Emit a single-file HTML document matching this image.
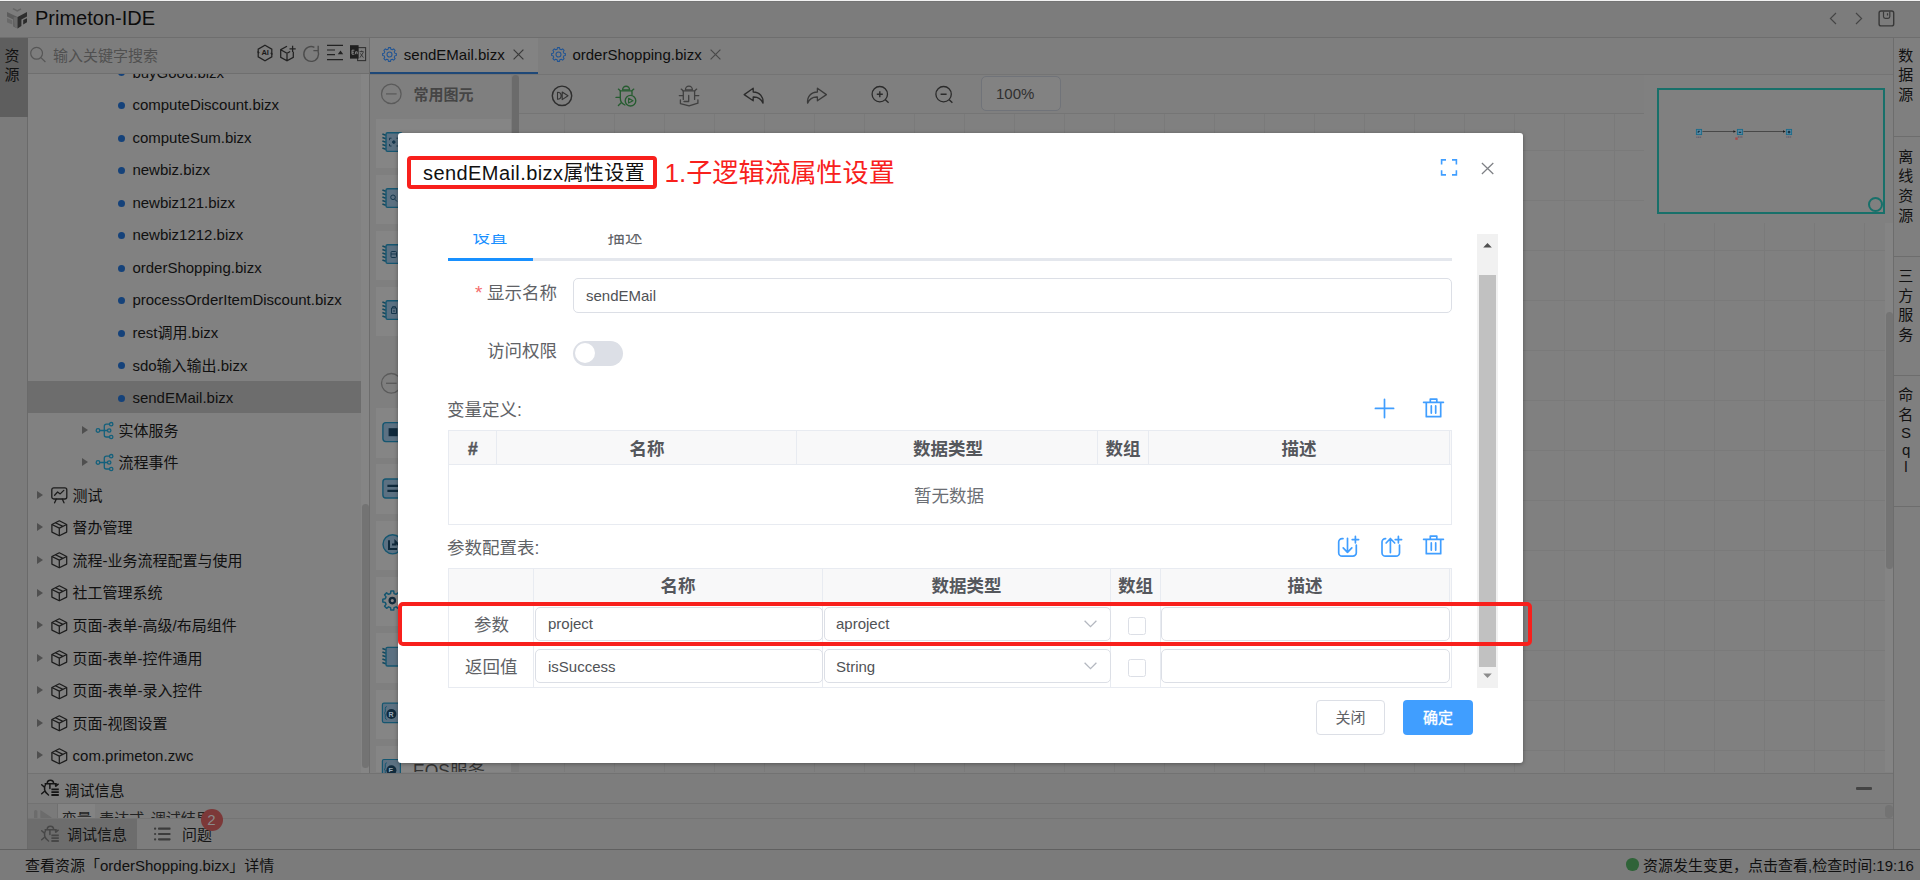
<!DOCTYPE html>
<html lang="zh-CN">
<head>
<meta charset="utf-8">
<title>Primeton-IDE</title>
<style>
*{box-sizing:border-box;margin:0;padding:0}
html,body{width:1920px;height:880px;overflow:hidden;background:#808080}
body{font-family:"Liberation Sans","Noto Sans CJK SC",sans-serif;font-size:15px;color:#000;position:relative}
.abs{position:absolute}
.t{position:absolute;white-space:nowrap;line-height:20px}
svg{position:absolute;overflow:visible}
#hdr{left:0;top:0;width:1920px;height:38px;background:#7c7c7c;border-bottom:1px solid #6e6e6e}
#lstrip{left:0;top:38px;width:28px;height:811px;background:#7b7b7b;border-right:1px solid #6a6a6a}
#lstrip-act{left:0;top:38px;width:28px;height:78.500px;background:#5e5e5e}
#search{left:28px;top:38px;width:341px;height:36px;background:#7d7d7d;border-bottom:1px solid #6f6f6f}
#tree{left:28px;top:74px;width:341px;height:699px;background:#818181;overflow:hidden;border-top:1px solid #6f6f6f}
#tree{border-top:0}
.row{position:absolute;left:0;width:333px;height:32px}
.row.sel{background:#6d6d6d}
.dot{position:absolute;width:7px;height:7px;border-radius:50%;background:#15427a}
.tri{position:absolute;width:0;height:0;border-left:6px solid #4f4f4f;border-top:4.5px solid transparent;border-bottom:4.5px solid transparent}
#split{left:369px;top:38px;width:1px;height:735px;background:#6d6d6d}
#tabs{left:370px;top:38px;width:1523px;height:37px;background:#7e7e7e;border-bottom:1px solid #747474}
#tab1{left:370px;top:38px;width:168px;height:34px;background:#838383}
#tab1u{left:370px;top:72px;width:168px;height:2px;background:#1e4878}
#pal{left:370px;top:75px;width:141px;height:697px;background:#7f7f7f;overflow:hidden}
.pi{position:absolute;left:6px;width:135px;height:49.500px;background:#858585}
#palsb{left:511px;top:75px;width:8px;height:697px;background:#7b7b7b}
#canvas{left:519px;top:113px;width:1374px;height:659px;overflow:hidden;background-color:#808080;
 background-image:linear-gradient(90deg,#7a7a7a 1px,transparent 1px),linear-gradient(#7a7a7a 1px,transparent 1px);
 background-size:50px 50px;background-position:-5px 37px}
#tbar{left:519px;top:75px;width:1125px;height:38.500px;background:#7f7f7f;border-bottom:1px solid #757575}
#mini{left:1644px;top:75px;width:249px;height:148px;background:#808080}
#rstrip{left:1893px;top:38px;width:27px;height:811px;background:#7f7f7f;border-left:1px solid #6d6d6d}
.rsep{position:absolute;left:0;width:27px;height:1px;background:#6d6d6d}
#dbg{left:28px;top:773px;width:1865px;height:76px;background:#7d7d7d;border-top:1px solid #727272}
#status{left:0;top:849px;width:1920px;height:31px;background:#7b7b7b;border-top:1px solid #606060}
#modal{left:398px;top:133px;width:1125px;height:630px;background:#fff;border-radius:3px;box-shadow:0 1px 4px rgba(0,0,0,.35)}
.inp{position:absolute;border:1px solid #dcdfe6;border-radius:5px;background:#fff}
.tbl{position:absolute;border:1px solid #e8ebf1;background:#fff}
.th{position:absolute;background:#f8f8f9}
.vl{position:absolute;top:0;width:1px;background:#e8ebf1}
.hl{position:absolute;left:0;width:1002px;height:1px;background:#e8ebf1}

</style>
</head>
<body>
<div id="hdr" class="abs"></div>
<div class="abs" style="left:0;top:0;width:1920px;height:1px;background:#f2f2f2"></div>
<div class="abs" style="left:0;top:1px;width:1920px;height:1px;background:#747474"></div>
<svg style="left:0;top:0" width="40" height="38" viewBox="0 0 40 38">
<polyline points="13,8.6 17.3,10.9 21,8.9" fill="none" stroke="#646464" stroke-width="1.6"/>
<polygon points="7,12 17.6,17 17.6,28.4 13.2,26.4 13.2,19.5 7,16.6" fill="#5c5c5c"/>
<polygon points="13.6,17.2 17.6,17 17.6,28.4 14.6,27" fill="#6a6a6a"/>
<polygon points="7,18 12.3,20.5 12.3,24.5 7,22.2" fill="#696969"/>
<polygon points="17.6,17 27,12 27,16.4 21.4,19.5 21.4,26 17.6,28.4" fill="#2e2e2e"/>
<polygon points="23.2,20.1 27,18.2 27,22.3 23.2,24.5" fill="#2a2a2a"/>
</svg>
<div class="t" style="left:35px;top:7.3px;font-size:20px;line-height:22px;color:#0c0c0c;">Primeton-IDE</div>
<svg style="left:1820px;top:0" width="90" height="38" viewBox="1820 0 90 38" fill="none" stroke="#444" stroke-width="1.3">
<polyline points="1836,13 1830.400,18.500 1836,24" stroke="#454545" stroke-width="1.150"/>
<polyline points="1856,13 1861.600,18.500 1856,24" stroke="#454545" stroke-width="1.150"/>
<rect x="1879.100" y="11" width="14.600" height="14.900" rx="2" stroke="#383838" stroke-width="1.400"/>
<path d="M1883.500 11.400v5.200q0 1.700 1.700 1.700h2.900q1.700 0 1.700-1.700v-5.200M1887.500 13.200v2.400" stroke="#3a3a3a" stroke-width="1.200"/>
</svg>
<div id="lstrip" class="abs"></div><div id="lstrip-act" class="abs"></div>
<div class="t" style="left:4.5px;top:45.5px;font-size:15px;line-height:20px;color:#111;">资</div>
<div class="t" style="left:4.5px;top:65.3px;font-size:15px;line-height:20px;color:#111;">源</div>
<div id="search" class="abs"></div>
<svg style="left:28px;top:38px" width="341" height="35" viewBox="28 38 341 35" fill="none" stroke="#222" stroke-width="1.25">
<g stroke="#565656" stroke-width="1.2"><circle cx="36.6" cy="53.3" r="5.9"/><path d="M40.9 57.6L45.4 62"/></g>
<!-- AI hexagon -->
<path d="M265 45.2l6.8 3.9v7.8l-6.8 3.9-6.8-3.9v-7.8z"/>
<path d="M257.6 51.6l1.6 1.6M272.4 54.4l-1.6-1.6" stroke-width="1.4"/>
<!-- cube plus -->
<path d="M287 46.2l-6.3 3.5v7.6l6.3 3.5 6.3-3.5v-5.5M280.7 49.7l6.3 3.6 3.2-1.8M287 53.3v7.5"/>
<path d="M289.5 48.8h6.2M292.6 45.7v6.2"/>
<!-- refresh -->
<path d="M318 51a7.400 7.400 0 1 1-3.600-3.700" stroke="#4c4c4c" stroke-width="1.400"/><path d="M318.200 45.800v4.800h-4.800" stroke="#4c4c4c" stroke-width="1.400"/>
<!-- collapse -->
<path d="M327 45.4h16M327 50h8M327 54.6h8M327 59.6h16" stroke-width="1.2"/><path d="M337.8 54.2l2.7-3.8 2.7 3.8z" fill="#222" stroke="none"/>
<!-- translate -->
<rect x="357.6" y="47.6" width="8" height="13" stroke="#333" stroke-width="1.1"/>
<rect x="350" y="45.2" width="8.6" height="13.4" fill="#1f1f1f" stroke="none"/>
<path d="M359.6 51.6h4M361.6 50.6v1M360 57.6l3.4-5.4M360.4 53.4l3 4.2" stroke="#333" stroke-width=".9"/>
<path d="M352 50.2h2.4M352 52.2h2M352 54.2h2.4M352 50.2v4M355.6 54.2v-2.4h1.6v2.4" stroke="#9a9a9a" stroke-width=".8"/>
</svg>
<div class="t" style="left:257.2px;top:47px;font-size:7.5px;line-height:11px;color:#1a1a1a;font-weight:bold;width:15.6px;text-align:center;letter-spacing:-.2px">AI</div>
<div class="t" style="left:53px;top:45.5px;font-size:15px;line-height:20px;color:#505050;">输入关键字搜索</div>
<div id="tree" class="abs">
<div class="dot" style="left:90.3px;top:-4.6px"></div>
<div class="t" style="left:104.4px;top:-11.4px;font-size:15px;line-height:20px;color:#101010;">buyGood.bizx</div>
<div class="dot" style="left:90.3px;top:28.0px"></div>
<div class="t" style="left:104.4px;top:21.15px;font-size:15px;line-height:20px;color:#101010;">computeDiscount.bizx</div>
<div class="dot" style="left:90.3px;top:60.5px"></div>
<div class="t" style="left:104.4px;top:53.7px;font-size:15px;line-height:20px;color:#101010;">computeSum.bizx</div>
<div class="dot" style="left:90.3px;top:93.1px"></div>
<div class="t" style="left:104.4px;top:86.25px;font-size:15px;line-height:20px;color:#101010;">newbiz.bizx</div>
<div class="dot" style="left:90.3px;top:125.6px"></div>
<div class="t" style="left:104.4px;top:118.8px;font-size:15px;line-height:20px;color:#101010;">newbiz121.bizx</div>
<div class="dot" style="left:90.3px;top:158.2px"></div>
<div class="t" style="left:104.4px;top:151.35px;font-size:15px;line-height:20px;color:#101010;">newbiz1212.bizx</div>
<div class="dot" style="left:90.3px;top:190.7px"></div>
<div class="t" style="left:104.4px;top:183.9px;font-size:15px;line-height:20px;color:#101010;">orderShopping.bizx</div>
<div class="dot" style="left:90.3px;top:223.2px"></div>
<div class="t" style="left:104.4px;top:216.45px;font-size:15px;line-height:20px;color:#101010;">processOrderItemDiscount.bizx</div>
<div class="dot" style="left:90.3px;top:255.8px"></div>
<div class="t" style="left:104.4px;top:249.0px;font-size:15px;line-height:20px;color:#101010;">rest调用.bizx</div>
<div class="dot" style="left:90.3px;top:288.4px"></div>
<div class="t" style="left:104.4px;top:281.55px;font-size:15px;line-height:20px;color:#101010;">sdo输入输出.bizx</div>
<div class="row sel" style="top:307.3px;height:31.6px"></div>
<div class="dot" style="left:90.3px;top:320.9px"></div>
<div class="t" style="left:104.4px;top:314.1px;font-size:15px;line-height:20px;color:#101010;">sendEMail.bizx</div>
<div class="tri" style="left:54px;top:351.8px"></div>
<svg style="left:68px;top:347.6px" width="18" height="18" viewBox="0 0 18 18"><g fill="none" stroke="#13607c" stroke-width="1.3"><circle cx="2" cy="8.5" r="1.8"/><circle cx="13.2" cy="8.5" r="1.7"/><circle cx="15.2" cy="2.2" r="1.7"/><circle cx="15.2" cy="15" r="1.7"/><path d="M3.8 8.5h7.7M13.5 2.2h-3.2a2 2 0 0 0-2 2v8.8a2 2 0 0 0 2 2h3.2"/></g></svg>
<div class="t" style="left:90.5px;top:346.65px;font-size:15px;line-height:20px;color:#101010;">实体服务</div>
<div class="tri" style="left:54px;top:384.3px"></div>
<svg style="left:68px;top:380.2px" width="18" height="18" viewBox="0 0 18 18"><g fill="none" stroke="#13607c" stroke-width="1.3"><circle cx="2" cy="8.5" r="1.8"/><circle cx="13.2" cy="8.5" r="1.7"/><circle cx="15.2" cy="2.2" r="1.7"/><circle cx="15.2" cy="15" r="1.7"/><path d="M3.8 8.5h7.7M13.5 2.2h-3.2a2 2 0 0 0-2 2v8.8a2 2 0 0 0 2 2h3.2"/></g></svg>
<div class="t" style="left:90.5px;top:379.2px;font-size:15px;line-height:20px;color:#101010;">流程事件</div>
<div class="tri" style="left:9px;top:416.9px"></div>
<svg style="left:22.6px;top:413.4px" width="17" height="17" viewBox="0 0 17 17"><g fill="none" stroke="#1c1c1c" stroke-width="1.3" stroke-linejoin="round" stroke-linecap="round"><rect x=".8" y=".8" width="15" height="11.2" rx="2"/><path d="M3.6 8.2l3-3.2 2.6 1.9 3.6-3.5M5.2 12.2l-1.6 3.6M11.4 12.2l1.6 3.6"/></g></svg>
<div class="t" style="left:44.599999999999994px;top:411.75px;font-size:15px;line-height:20px;color:#101010;">测试</div>
<div class="tri" style="left:9px;top:449.4px"></div>
<svg style="left:22.6px;top:445.9px" width="17" height="17" viewBox="0 0 17 17"><g fill="none" stroke="#1c1c1c" stroke-width="1.25" stroke-linejoin="round"><path d="M8.3 .8l7.4 3.7v7.6l-7.4 3.7-7.4-3.7v-7.6z"/><path d="M.9 4.5l7.4 3.6 7.4-3.6M8.3 8.1v7.7M4.4 2.7l7.5 3.7"/></g></svg>
<div class="t" style="left:44.599999999999994px;top:444.3px;font-size:15px;line-height:20px;color:#101010;">督办管理</div>
<div class="tri" style="left:9px;top:481.9px"></div>
<svg style="left:22.6px;top:478.4px" width="17" height="17" viewBox="0 0 17 17"><g fill="none" stroke="#1c1c1c" stroke-width="1.25" stroke-linejoin="round"><path d="M8.3 .8l7.4 3.7v7.6l-7.4 3.7-7.4-3.7v-7.6z"/><path d="M.9 4.5l7.4 3.6 7.4-3.6M8.3 8.1v7.7M4.4 2.7l7.5 3.7"/></g></svg>
<div class="t" style="left:44.599999999999994px;top:476.85px;font-size:15px;line-height:20px;color:#101010;">流程-业务流程配置与使用</div>
<div class="tri" style="left:9px;top:514.5px"></div>
<svg style="left:22.6px;top:511.0px" width="17" height="17" viewBox="0 0 17 17"><g fill="none" stroke="#1c1c1c" stroke-width="1.25" stroke-linejoin="round"><path d="M8.3 .8l7.4 3.7v7.6l-7.4 3.7-7.4-3.7v-7.6z"/><path d="M.9 4.5l7.4 3.6 7.4-3.6M8.3 8.1v7.7M4.4 2.7l7.5 3.7"/></g></svg>
<div class="t" style="left:44.599999999999994px;top:509.4px;font-size:15px;line-height:20px;color:#101010;">社工管理系统</div>
<div class="tri" style="left:9px;top:547.0px"></div>
<svg style="left:22.6px;top:543.5px" width="17" height="17" viewBox="0 0 17 17"><g fill="none" stroke="#1c1c1c" stroke-width="1.25" stroke-linejoin="round"><path d="M8.3 .8l7.4 3.7v7.6l-7.4 3.7-7.4-3.7v-7.6z"/><path d="M.9 4.5l7.4 3.6 7.4-3.6M8.3 8.1v7.7M4.4 2.7l7.5 3.7"/></g></svg>
<div class="t" style="left:44.599999999999994px;top:541.95px;font-size:15px;line-height:20px;color:#101010;">页面-表单-高级/布局组件</div>
<div class="tri" style="left:9px;top:579.6px"></div>
<svg style="left:22.6px;top:576.1px" width="17" height="17" viewBox="0 0 17 17"><g fill="none" stroke="#1c1c1c" stroke-width="1.25" stroke-linejoin="round"><path d="M8.3 .8l7.4 3.7v7.6l-7.4 3.7-7.4-3.7v-7.6z"/><path d="M.9 4.5l7.4 3.6 7.4-3.6M8.3 8.1v7.7M4.4 2.7l7.5 3.7"/></g></svg>
<div class="t" style="left:44.599999999999994px;top:574.5px;font-size:15px;line-height:20px;color:#101010;">页面-表单-控件通用</div>
<div class="tri" style="left:9px;top:612.1px"></div>
<svg style="left:22.6px;top:608.6px" width="17" height="17" viewBox="0 0 17 17"><g fill="none" stroke="#1c1c1c" stroke-width="1.25" stroke-linejoin="round"><path d="M8.3 .8l7.4 3.7v7.6l-7.4 3.7-7.4-3.7v-7.6z"/><path d="M.9 4.5l7.4 3.6 7.4-3.6M8.3 8.1v7.7M4.4 2.7l7.5 3.7"/></g></svg>
<div class="t" style="left:44.599999999999994px;top:607.05px;font-size:15px;line-height:20px;color:#101010;">页面-表单-录入控件</div>
<div class="tri" style="left:9px;top:644.7px"></div>
<svg style="left:22.6px;top:641.2px" width="17" height="17" viewBox="0 0 17 17"><g fill="none" stroke="#1c1c1c" stroke-width="1.25" stroke-linejoin="round"><path d="M8.3 .8l7.4 3.7v7.6l-7.4 3.7-7.4-3.7v-7.6z"/><path d="M.9 4.5l7.4 3.6 7.4-3.6M8.3 8.1v7.7M4.4 2.7l7.5 3.7"/></g></svg>
<div class="t" style="left:44.599999999999994px;top:639.6px;font-size:15px;line-height:20px;color:#101010;">页面-视图设置</div>
<div class="tri" style="left:9px;top:677.2px"></div>
<svg style="left:22.6px;top:673.8px" width="17" height="17" viewBox="0 0 17 17"><g fill="none" stroke="#1c1c1c" stroke-width="1.25" stroke-linejoin="round"><path d="M8.3 .8l7.4 3.7v7.6l-7.4 3.7-7.4-3.7v-7.6z"/><path d="M.9 4.5l7.4 3.6 7.4-3.6M8.3 8.1v7.7M4.4 2.7l7.5 3.7"/></g></svg>
<div class="t" style="left:44.599999999999994px;top:672.15px;font-size:15px;line-height:20px;color:#101010;">com.primeton.zwc</div>
<div class="abs" style="left:333px;top:0;width:8px;height:699px;background:#858585"></div>
<div class="abs" style="left:333.5px;top:430px;width:7px;height:264px;background:#737373;border-radius:4px"></div>
</div>
<div id="split" class="abs"></div><div id="tabs" class="abs"></div><div id="tab1" class="abs"></div><div id="tab1u" class="abs"></div>
<svg style="left:381.900px;top:47px" width="15" height="15" viewBox="0 0 15 15"><g fill="none" stroke="#205494" stroke-width="1.050" stroke-linejoin="round"><path d="M6.17 2.16L6.47 0.63L8.53 0.63L8.83 2.16L10.33 2.79L11.63 1.91L13.09 3.37L12.21 4.67L12.84 6.17L14.37 6.47L14.37 8.53L12.84 8.83L12.21 10.33L13.09 11.63L11.63 13.09L10.33 12.21L8.83 12.84L8.53 14.37L6.47 14.37L6.17 12.84L4.67 12.21L3.37 13.09L1.91 11.63L2.79 10.33L2.16 8.83L0.63 8.53L0.63 6.47L2.16 6.17L2.79 4.67L1.91 3.37L3.37 1.91L4.67 2.79z"/><circle cx="7.500" cy="7.500" r="2.500"/></g></svg>
<div class="t" style="left:403.8px;top:45.2px;font-size:15px;line-height:20px;color:#0e0e0e;">sendEMail.bizx</div>
<svg style="left:513px;top:49px" width="11" height="11" viewBox="0 0 11 11"><path d="M.6.6l9.8 9.8M10.4.6L.6 10.4" stroke="#3a3a3a" stroke-width="1.2"/></svg>
<svg style="left:551.100px;top:47px" width="15" height="15" viewBox="0 0 15 15"><g fill="none" stroke="#205494" stroke-width="1.050" stroke-linejoin="round"><path d="M6.17 2.16L6.47 0.63L8.53 0.63L8.83 2.16L10.33 2.79L11.63 1.91L13.09 3.37L12.21 4.67L12.84 6.17L14.37 6.47L14.37 8.53L12.84 8.83L12.21 10.33L13.09 11.63L11.63 13.09L10.33 12.21L8.83 12.84L8.53 14.37L6.47 14.37L6.17 12.84L4.67 12.21L3.37 13.09L1.91 11.63L2.79 10.33L2.16 8.83L0.63 8.53L0.63 6.47L2.16 6.17L2.79 4.67L1.91 3.37L3.37 1.91L4.67 2.79z"/><circle cx="7.500" cy="7.500" r="2.500"/></g></svg>
<div class="t" style="left:572.4px;top:45.2px;font-size:15px;line-height:20px;color:#0e0e0e;">orderShopping.bizx</div>
<svg style="left:709.6px;top:49px" width="11" height="11" viewBox="0 0 11 11"><path d="M.6.6l9.8 9.8M10.4.6L.6 10.4" stroke="#4a4a4a" stroke-width="1.2"/></svg>
<div id="pal" class="abs">
<div class="pi" style="top:43.5px"></div>
<div class="pi" style="top:99.5px"></div>
<div class="pi" style="top:155.5px"></div>
<div class="pi" style="top:211.5px"></div>
<div class="pi" style="top:333.0px"></div>
<div class="pi" style="top:389.3px"></div>
<div class="pi" style="top:445.6px"></div>
<div class="pi" style="top:501.9px"></div>
<div class="pi" style="top:558.2px"></div>
<div class="pi" style="top:614.5px"></div>
<div class="pi" style="top:670.8px"></div>
</div>
<svg style="left:370px;top:74px" width="150" height="698" viewBox="370 74 150 698" fill="none">
<g stroke="#5b5b5b" stroke-width="1.3"><circle cx="391.3" cy="93.9" r="9.8"/><path d="M386 93.9h10.6"/><circle cx="391.3" cy="383.3" r="9.8"/><path d="M386 383.3h10.6"/></g>
<g transform="translate(0,0)">
<path d="M382.4 135.5l3.4 1.3M382.4 139l3.4 1.3M382.4 142.5l3.4 1.3M382.4 146l3.4 1.3M382.4 149.5l3.4 1.3" stroke="#14495f" stroke-width="1.6" transform="translate(0,-1.6)"/>
<rect x="386" y="132.8" width="16" height="18.6" rx="1.6" fill="#5c7182" stroke="#155670" stroke-width="1.4"/>
</g>
<g transform="translate(0,56)">
<path d="M382.4 135.5l3.4 1.3M382.4 139l3.4 1.3M382.4 142.5l3.4 1.3M382.4 146l3.4 1.3M382.4 149.5l3.4 1.3" stroke="#14495f" stroke-width="1.6" transform="translate(0,-1.6)"/>
<rect x="386" y="132.8" width="16" height="18.6" rx="1.6" fill="#5c7182" stroke="#155670" stroke-width="1.4"/>
</g>
<g transform="translate(0,112)">
<path d="M382.4 135.5l3.4 1.3M382.4 139l3.4 1.3M382.4 142.5l3.4 1.3M382.4 146l3.4 1.3M382.4 149.5l3.4 1.3" stroke="#14495f" stroke-width="1.6" transform="translate(0,-1.6)"/>
<rect x="386" y="132.8" width="16" height="18.6" rx="1.6" fill="#5c7182" stroke="#155670" stroke-width="1.4"/>
</g>
<g transform="translate(0,168)">
<path d="M382.4 135.5l3.4 1.3M382.4 139l3.4 1.3M382.4 142.5l3.4 1.3M382.4 146l3.4 1.3M382.4 149.5l3.4 1.3" stroke="#14495f" stroke-width="1.6" transform="translate(0,-1.6)"/>
<rect x="386" y="132.8" width="16" height="18.6" rx="1.6" fill="#5c7182" stroke="#155670" stroke-width="1.4"/>
</g>
<g transform="translate(0,514.6)">
<path d="M382.4 135.5l3.4 1.3M382.4 139l3.4 1.3M382.4 142.5l3.4 1.3M382.4 146l3.4 1.3M382.4 149.5l3.4 1.3" stroke="#14495f" stroke-width="1.6" transform="translate(0,-1.6)"/>
<rect x="386" y="132.8" width="16" height="18.6" rx="1.6" fill="#5c7182" stroke="#155670" stroke-width="1.4"/>
</g>
<g stroke="#16384e" stroke-width="1"><path d="M389.5 140.2v-2h2M396.5 138.2h1.5M389.5 144v2h2M396.5 146h1.5"/><circle cx="393.8" cy="142.1" r="1.3" fill="#16384e"/>
<circle cx="393" cy="197.3" r="2.3"/><path d="M394.8 199.2l2.2 2.3"/>
<rect x="391" y="251.5" width="5.5" height="6" rx="1"/><path d="M391 254h5.5"/>
<path d="M391.5 308h5v5.5h-5zM392.5 308v-1.3h3v1.3M394 310v2"/></g>
<rect x="382.9" y="422.6" width="18" height="19" rx="3" fill="#5c7182" stroke="#155670" stroke-width="1.4"/><rect x="388.6" y="428.2" width="9" height="8" fill="#102a3c"/>
<rect x="382.9" y="479" width="18" height="19" rx="3" fill="#5c7182" stroke="#155670" stroke-width="1.4"/><path d="M387.4 485.8h12M387.4 490.8h12" stroke="#102a3c" stroke-width="2.2"/>
<circle cx="392.6" cy="544.3" r="9.6" fill="#5c7182" stroke="#155670" stroke-width="1.4"/><path d="M389 540.2v8.8h8M392 544.5h3.4v-3l4 4.2" stroke="#102a3c" stroke-width="2"/>
<g stroke="#155670" stroke-width="1.500" stroke-linejoin="round" transform="translate(392.300,600.600)"><path d="M-1.77 -7.08L-1.42 -9.49L1.42 -9.49L1.77 -7.08L3.76 -6.26L5.71 -7.72L7.72 -5.71L6.26 -3.76L7.08 -1.77L9.49 -1.42L9.49 1.42L7.08 1.77L6.26 3.76L7.72 5.71L5.71 7.72L3.76 6.26L1.77 7.08L1.42 9.49L-1.42 9.49L-1.77 7.08L-3.76 6.26L-5.71 7.72L-7.72 5.71L-6.26 3.76L-7.08 1.77L-9.49 1.42L-9.49 -1.42L-7.08 -1.77L-6.26 -3.76L-7.72 -5.71L-5.71 -7.72L-3.76 -6.26z"/><circle cx="0" cy="0" r="2.700" stroke="#102a3c" stroke-width="2.200"/></g>
<rect x="382.4" y="703.2" width="18" height="19.4" rx="1.5" fill="#5c7182" stroke="#155670" stroke-width="1.2"/><circle cx="391.4" cy="714" r="5" fill="#102a3c"/><path d="M385.4 706.5q-1.5 0-1.5 2v2.5q0 1.8-1 2 1 .2 1 2v2.5q0 2 1.5 2" stroke="#155670" stroke-width="1" transform="translate(1.4,0)"/>
<rect x="382.4" y="759.5" width="18" height="19.4" rx="1.5" fill="#5c7182" stroke="#155670" stroke-width="1.2"/><circle cx="391.4" cy="770.3" r="5" fill="#102a3c"/><path d="M385.4 762.8q-1.5 0-1.5 2v2.5q0 1.8-1 2 1 .2 1 2v2.5q0 2 1.5 2" stroke="#155670" stroke-width="1" transform="translate(1.4,0)"/>
</svg>
<div class="t" style="left:413.6px;top:84.5px;font-size:15px;line-height:20px;color:#454545;font-weight:bold">常用图元</div>
<div class="t" style="left:388.6px;top:708.5px;font-size:7px;line-height:11px;color:#9ab;font-weight:bold">R</div>
<div class="abs" style="left:370px;top:752px;width:141px;height:20px;overflow:hidden"><div class="t" style="left:43px;top:7.6px;font-size:17.5px;line-height:22px;color:#333;">EOS服务</div><div class="t" style="left:18.6px;top:13px;font-size:7px;line-height:11px;color:#9ab;font-weight:bold">E</div></div>
<div id="palsb" class="abs"></div><div class="abs" style="left:511.5px;top:75px;width:7px;height:60px;background:#6b6b6b;border-radius:4px 4px 0 0"></div>
<div id="canvas" class="abs"></div>
<div id="tbar" class="abs"></div>
<div id="mini" class="abs"></div>
<svg style="left:519px;top:74px" width="560" height="40" viewBox="519 74 560 40" fill="none" stroke="#2b2b2b" stroke-width="1.3" stroke-linejoin="round">
<circle cx="562" cy="95.800" r="9.700" stroke="#2e2e2e" stroke-width="1.450"/><path d="M557.500 92.300c2.600 0 3.600 1.600 3.600 3.500s-1 3.500-3.600 3.500zM562.200 92l5.800 3.800-5.800 3.800z" stroke="#333" stroke-width="1.100"/>
<g stroke="#265c30" stroke-width="1.350" stroke-linecap="round"><path d="M622.600 89.900a3.500 3.700 0 0 1 7 0z"/><path d="M619.900 90.800h12.300M620.300 91v7.200c0 3 1.600 5.400 4.600 6.800M632 91v3.600M618.400 89.100l2.200 2M633.800 89.100l-2.200 2M616 97.400h3.800M618.400 105.500l2.800-2.700"/><circle cx="630.500" cy="100.700" r="5.300"/><path d="M628.600 98.300l4.400 2.400-4.400 2.400z" stroke-width="1.100"/></g>
<g stroke="#404040" stroke-width="1.300" stroke-linecap="round"><path d="M685.400 89.900a3.500 3.700 0 0 1 7 0z"/><path d="M682.600 90.800h12.500M683.300 91v8.400M694.600 91v8.400M681.200 89.100l2.200 2M696.700 89.100l-2.200 2M679.300 95.600h3.600M695.200 95.600h3.600M688.700 95.400v5.600M680.400 99.800v3.800l8.700 2.300 8.800-2.700v-3.400M684 101.500h4.700"/></g>
<path d="M753.200 88.200l-9 6.400 9 6.200v-3.800c4.600-.2 7.800 1.400 9.800 6.200.6-6.400-3.200-11-9.800-11.200z"/>
<path d="M817.400 88.200l9 6.400-9 6.200v-3.800c-4.600-.2-7.800 1.400-9.800 6.200-.6-6.400 3.200-11 9.800-11.200z" stroke="#3a3a3a"/>
<circle cx="879.800" cy="94.200" r="7.700"/><path d="M885.400 99.800l3.200 3M876.800 94.200h6M879.800 91.200v6" stroke-width="1.400"/>
<circle cx="943.600" cy="94.200" r="7.700"/><path d="M949.200 99.800l3.200 3M940.600 94.200h6" stroke-width="1.400"/>
</svg>
<div class="abs" style="left:981px;top:76px;width:80px;height:35px;border:1px solid #707379;border-radius:5px;background:#828282"></div>
<div class="t" style="left:996px;top:84.3px;font-size:15px;line-height:20px;color:#303030;">100%</div>
<div class="abs" style="left:1657px;top:88px;width:228px;height:126px;border:2px solid #18706a"></div>
<div class="abs" style="left:1868px;top:197px;width:15px;height:15px;border:2px solid #18706a;border-radius:50%"></div>
<svg style="left:1690px;top:125px" width="110" height="20" viewBox="1690 125 110 20" fill="none">
<path d="M1702.500 131.500h31.500M1743.500 131.500h41" stroke="#3a3a3a" stroke-width=".8"/>
<path d="M1733.400 130.300l2.600 1.200-2.600 1.200zM1783 130.300l2.600 1.200-2.600 1.200z" fill="#1a1a1a"/>
<g fill="#5686a0" stroke="#1a6c8c" stroke-width=".9"><rect x="1696.400" y="129.400" width="5.200" height="5.200"/><rect x="1737.400" y="129.400" width="5.200" height="5.200"/><rect x="1786.400" y="129.400" width="5.200" height="5.200"/></g>
<path d="M1698.200 132.800v-1.500h1.600M1738.800 132.300h2.400M1788.300 131.300h1.500v1.500h-1.500z" stroke="#0c2230" stroke-width="1"/>
<path d="M1696.300 137.300h5.200M1737.800 137h5M1786.300 137h5.200" stroke="#666070" stroke-width="1.400" stroke-dasharray="1.200 .5"/><rect x="1735.300" y="137.400" width="2.400" height="2.400" fill="#a84848"/>
</svg>
<div class="abs" style="left:1885px;top:223px;width:8px;height:549px;background:#848484"></div>
<div class="abs" style="left:1885.500px;top:312px;width:7px;height:257px;background:#747474;border-radius:4px"></div>
<div id="rstrip" class="abs"><div class="rsep" style="top:98px"></div><div class="rsep" style="top:218px"></div><div class="rsep" style="top:337px"></div><div class="rsep" style="top:468px"></div></div>
<div class="t" style="left:1898.2px;top:45.5px;font-size:15px;line-height:20px;color:#111;">数</div>
<div class="t" style="left:1898.2px;top:65.3px;font-size:15px;line-height:20px;color:#111;">据</div>
<div class="t" style="left:1898.2px;top:85.1px;font-size:15px;line-height:20px;color:#111;">源</div>
<div class="t" style="left:1898.2px;top:146.5px;font-size:15px;line-height:20px;color:#111;">离</div>
<div class="t" style="left:1898.2px;top:166.3px;font-size:15px;line-height:20px;color:#111;">线</div>
<div class="t" style="left:1898.2px;top:186.1px;font-size:15px;line-height:20px;color:#111;">资</div>
<div class="t" style="left:1898.2px;top:205.9px;font-size:15px;line-height:20px;color:#111;">源</div>
<div class="t" style="left:1898.2px;top:265.7px;font-size:15px;line-height:20px;color:#111;">三</div>
<div class="t" style="left:1898.2px;top:285.5px;font-size:15px;line-height:20px;color:#111;">方</div>
<div class="t" style="left:1898.2px;top:305.3px;font-size:15px;line-height:20px;color:#111;">服</div>
<div class="t" style="left:1898.2px;top:325.1px;font-size:15px;line-height:20px;color:#111;">务</div>
<div class="t" style="left:1898.2px;top:384.8px;font-size:15px;line-height:20px;color:#111;">命</div>
<div class="t" style="left:1898.2px;top:404.6px;font-size:15px;line-height:20px;color:#111;">名</div>
<div class="t" style="left:1901px;top:423.3px;font-size:15px;line-height:20px;color:#111;">S</div>
<div class="t" style="left:1902px;top:440.3px;font-size:15px;line-height:20px;color:#111;">q</div>
<div class="t" style="left:1904.3px;top:457.3px;font-size:15px;line-height:20px;color:#111;">l</div>
<div id="dbg" class="abs"></div>
<div class="abs" style="left:28px;top:803px;width:1865px;height:1px;background:#727272"></div>
<div class="abs" style="left:28px;top:818px;width:1865px;height:1px;background:#747474"></div>
<svg style="left:41px;top:780.400px" width="18" height="17" viewBox="0 0 18 17"><g fill="none" stroke="#151515" stroke-width="1.500" stroke-linecap="round"><path d="M6.200 3.500a3.200 3.300 0 0 1 6.400 0M4.200 3.700h11M4.700 4q-3.500 6.500 2.800 11M8.900 4v4.400M14.600 4v2M.7 4.700l2.500 2.300M.7 13.700l2.600-2.200M14.800 6.200l2.400-2"/><path d="M10.400 9.400h7.400M10.400 12.200h7.400M10.400 15h7.400" stroke-width="1.800" stroke-linecap="butt"/></g></svg>
<div class="t" style="left:64.6px;top:780.6px;font-size:15px;line-height:20px;color:#111;">调试信息</div>
<div class="abs" style="left:1855.500px;top:787px;width:16.500px;height:2.600px;background:#444;border-radius:1px"></div>
<div class="abs" style="left:28px;top:804px;width:1865px;height:14px;overflow:hidden"><div class="abs" style="left:0;top:0;width:29.500px;height:14px;background:#7a7a7a;border-right:1px solid #707070"></div><div class="abs" style="left:30px;top:0;width:37px;height:14px;background:#838383"></div><svg style="left:5.800px;top:6px" width="20" height="14" viewBox="0 0 20 14"><rect x="0" y="0" width="3.400" height="14" rx="1.500" fill="#6c6c6c"/><path d="M6.400 0l11.200 7.600v6h-11.200z" fill="#6c6c6c"/></svg><div class="t" style="left:33.8px;top:4.8px;font-size:15px;line-height:20px;color:#222;">变量</div><div class="t" style="left:71.2px;top:4.8px;font-size:15px;line-height:20px;color:#222;">表达式</div><div class="t" style="left:122.8px;top:4.8px;font-size:15px;line-height:20px;color:#222;">调试结果</div></div>
<div class="abs" style="left:1885px;top:804.500px;width:8px;height:13px;background:#737373;border-radius:4px"></div>
<div class="abs" style="left:28px;top:819px;width:109px;height:30px;background:#6d6d6d"></div>
<svg style="left:41px;top:826.200px" width="18" height="17" viewBox="0 0 18 17"><g fill="none" stroke="#474747" stroke-width="1.500" stroke-linecap="round"><path d="M6.200 3.500a3.200 3.300 0 0 1 6.400 0M4.200 3.700h11M4.700 4q-3.500 6.500 2.800 11M8.900 4v4.400M14.600 4v2M.7 4.700l2.500 2.300M.7 13.700l2.600-2.200M14.800 6.200l2.400-2"/><path d="M10.400 9.400h7.400M10.400 12.200h7.400M10.400 15h7.400" stroke-width="1.800" stroke-linecap="butt"/></g></svg>
<div class="t" style="left:67px;top:824.5px;font-size:15px;line-height:20px;color:#151515;">调试信息</div>
<svg style="left:153.800px;top:827px" width="17" height="14" viewBox="0 0 17 14"><g fill="#3c3c3c"><rect x="0" y=".6" width="2.200" height="2.200" rx="1"/><rect x="4" y=".6" width="12.600" height="2.200" rx=".8"/><rect x="0" y="5.900" width="2.200" height="2.200" rx="1"/><rect x="4" y="5.900" width="12.600" height="2.200" rx=".8"/><rect x="0" y="11.200" width="2.200" height="2.200" rx="1"/><rect x="4" y="11.200" width="12.600" height="2.200" rx=".8"/></g></svg>
<div class="t" style="left:182px;top:824.5px;font-size:15px;line-height:20px;color:#151515;">问题</div>
<div class="abs" style="left:200.500px;top:809.300px;width:22px;height:22px;border-radius:50%;background:#7c3838;color:#8a8a8a;font-size:15px;line-height:22px;text-align:center">2</div>
<div id="status" class="abs"></div>
<div class="t" style="left:25px;top:855.5px;font-size:15px;line-height:20px;color:#101010;">查看资源「orderShopping.bizx」详情</div>
<div class="abs" style="left:1626.200px;top:858.200px;width:12.400px;height:12.400px;border-radius:50%;background:#2f6338"></div>
<div class="t" style="left:1643px;top:855.5px;font-size:15px;line-height:20px;color:#101010;">资源发生变更，点击查看,检查时间:19:16</div>
<div id="modal" class="abs"></div>
<div class="abs" style="left:407px;top:156px;width:250px;height:33px;border:4px solid #f8201c;border-radius:4px"></div>
<div class="t" style="left:423px;top:160px;font-size:20px;line-height:26px;color:#111;letter-spacing:.42px">sendEMail.bizx属性设置</div>
<div class="t" style="left:664.6px;top:156.3px;font-size:26.05px;line-height:34px;color:#f8201c;">1.子逻辑流属性设置</div>
<svg style="left:1440px;top:159px" width="18" height="18" viewBox="0 0 18 18"><path d="M1.600 5.500v-4.600h4.400M12 .9h4.400v4.600M16.400 11.300v4.600h-4.400M6 15.900h-4.400v-4.600" fill="none" stroke="#409eff" stroke-width="1.600"/></svg>
<svg style="left:1481px;top:162px" width="14" height="14" viewBox="0 0 14 14"><path d="M.9 1l11.400 11M12.300 1l-11.400 11" stroke="#7e8085" stroke-width="1.250"/></svg>
<div class="abs" style="left:448px;top:234px;width:1004px;height:20px;overflow:hidden"><div class="t" style="left:24.5px;top:-9.0px;font-size:17.5px;line-height:24px;color:#1890ff;">设置</div><div class="t" style="left:159.5px;top:-9.0px;font-size:17.5px;line-height:24px;color:#606266;">描述</div></div>
<div class="abs" style="left:448px;top:258px;width:1004px;height:3px;background:#e4e7ed"></div>
<div class="abs" style="left:448px;top:258px;width:85px;height:3px;background:#1890ff"></div>
<div class="t" style="left:475px;top:280.6px;font-size:19px;line-height:24px;color:#f56c6c;">*</div>
<div class="t" style="left:487px;top:281.3px;font-size:17.5px;line-height:24px;color:#606266;">显示名称</div>
<div class="inp" style="left:573px;top:278px;width:879px;height:34.500px"></div>
<div class="t" style="left:586px;top:285.5px;font-size:15px;line-height:20px;color:#505256;">sendEMail</div>
<div class="t" style="left:487px;top:339.3px;font-size:17.5px;line-height:24px;color:#606266;">访问权限</div>
<div class="abs" style="left:573px;top:340.500px;width:50px;height:25px;border-radius:12.500px;background:#dcdfe6"></div><div class="abs" style="left:574.600px;top:342.700px;width:20.600px;height:20.600px;border-radius:50%;background:#fff"></div>
<div class="t" style="left:447px;top:397.5px;font-size:17.5px;line-height:24px;color:#606266;">变量定义:</div>
<svg style="left:1375.300px;top:398.900px" width="19" height="19" viewBox="0 0 19 19"><path d="M9.500 .4v18.200M.4 9.400h18.200" stroke="#409eff" stroke-width="1.700" stroke-linecap="round"/></svg>
<svg style="left:1424px;top:398.100px" width="19" height="21" viewBox="0 0 19 21"><g fill="none" stroke="#409eff" stroke-width="1.700" stroke-linecap="round" stroke-linejoin="round"><path d="M-.4 4.300h19.800M6.300 4v-2.900h6.500v2.900M2.300 4.300v14.400h14.400v-14.400M7.300 7.900v7.200M11.700 7.900v7.200"/></g></svg>
<div class="tbl" style="left:448px;top:430px;width:1004px;height:94.500px"><div class="th" style="left:0;top:0;width:1002px;height:33px"></div><div class="vl" style="left:46.500px;height:34px"></div><div class="vl" style="left:346.500px;height:34px"></div><div class="vl" style="left:647.500px;height:34px"></div><div class="vl" style="left:698.500px;height:34px"></div><div class="vl" style="left:999.500px;height:34px"></div><div class="hl" style="top:33px"></div></div>
<div class="t" style="left:468px;top:436.5px;font-size:17.5px;line-height:24px;color:#55575c;font-weight:bold;-webkit-text-stroke:.5px #55575c">#</div>
<div class="t" style="left:629.5px;top:436.5px;font-size:17.5px;line-height:24px;color:#55575c;font-weight:bold">名称</div>
<div class="t" style="left:913px;top:436.5px;font-size:17.5px;line-height:24px;color:#55575c;font-weight:bold">数据类型</div>
<div class="t" style="left:1105.5px;top:436.5px;font-size:17.5px;line-height:24px;color:#55575c;font-weight:bold">数组</div>
<div class="t" style="left:1281.5px;top:436.5px;font-size:17.5px;line-height:24px;color:#55575c;font-weight:bold">描述</div>
<div class="t" style="left:914px;top:483.5px;font-size:17.5px;line-height:24px;color:#6b6e74;">暂无数据</div>
<div class="t" style="left:447px;top:535.5px;font-size:17.5px;line-height:24px;color:#606266;">参数配置表:</div>
<svg style="left:1330px;top:530px" width="80" height="32" viewBox="1330 530 80 32" fill="none" stroke="#409eff" stroke-width="1.700" stroke-linecap="round" stroke-linejoin="round">
<path d="M1343 538.600h-.8a3.500 3.500 0 0 0-3.500 3.500v10.600a3.500 3.500 0 0 0 3.500 3.500h10.600a3.500 3.500 0 0 0 3.500-3.500v-7.600"/>
<path d="M1347.500 538.300v14M1343.200 547.800l4.300 4.500 4.300-4.500M1355.400 536.400v6.400M1352.200 539.600h6.400"/>
<path d="M1385.600 538.600h-.1a3.500 3.500 0 0 0-3.500 3.500v10.600a3.500 3.500 0 0 0 3.500 3.500h10.500a3.500 3.500 0 0 0 3.500-3.500v-7.600"/>
<path d="M1390.400 552.600v-14M1386.100 543l4.300-4.500 4.300 4.500M1398.400 536.400v6.400M1395.200 539.600h6.400"/>
</svg>
<svg style="left:1424px;top:535.350px" width="19" height="21" viewBox="0 0 19 21"><g fill="none" stroke="#409eff" stroke-width="1.700" stroke-linecap="round" stroke-linejoin="round"><path d="M-.4 4.300h19.800M6.300 4v-2.900h6.500v2.900M2.300 4.300v14.400h14.400v-14.400M7.300 7.900v7.200M11.700 7.900v7.200"/></g></svg>
<div class="tbl" style="left:448px;top:568px;width:1004px;height:119.500px"><div class="th" style="left:0;top:0;width:1002px;height:33.500px"></div><div class="vl" style="left:83.500px;height:118px"></div><div class="vl" style="left:372.500px;height:118px"></div><div class="vl" style="left:660.500px;height:118px"></div><div class="vl" style="left:710.500px;height:118px"></div><div class="vl" style="left:999.500px;height:34px"></div><div class="hl" style="top:33.500px"></div><div class="hl" style="top:76px"></div></div>
<div class="t" style="left:660.5px;top:574px;font-size:17.5px;line-height:24px;color:#55575c;font-weight:bold">名称</div>
<div class="t" style="left:931.5px;top:574px;font-size:17.5px;line-height:24px;color:#55575c;font-weight:bold">数据类型</div>
<div class="t" style="left:1118px;top:574px;font-size:17.5px;line-height:24px;color:#55575c;font-weight:bold">数组</div>
<div class="t" style="left:1287.5px;top:574px;font-size:17.5px;line-height:24px;color:#55575c;font-weight:bold">描述</div>
<div class="t" style="left:474px;top:612.5px;font-size:17.5px;line-height:24px;color:#606266;">参数</div>
<div class="inp" style="left:535px;top:607.0px;width:287.500px;height:34px"></div>
<div class="t" style="left:548px;top:614.0px;font-size:15px;line-height:20px;color:#505256;">project</div>
<div class="inp" style="left:823.500px;top:607.0px;width:287px;height:34px"></div>
<div class="t" style="left:836px;top:614.0px;font-size:15px;line-height:20px;color:#505256;">aproject</div>
<svg style="left:1083.500px;top:619.5px" width="13" height="8" viewBox="0 0 13 8"><path d="M.6.800l5.900 5.800 5.900-5.800" fill="none" stroke="#b4b8c0" stroke-width="1.300"/></svg>
<div class="abs" style="left:1128px;top:617.0px;width:17.500px;height:17.500px;border:1px solid #dcdfe6;border-radius:2.500px;background:#fff"></div>
<div class="inp" style="left:1161px;top:607.0px;width:288.500px;height:34px"></div>
<div class="t" style="left:465px;top:654.8px;font-size:17.5px;line-height:24px;color:#606266;">返回值</div>
<div class="inp" style="left:535px;top:649.3px;width:287.500px;height:34px"></div>
<div class="t" style="left:548px;top:656.8px;font-size:15px;line-height:20px;color:#505256;">isSuccess</div>
<div class="inp" style="left:823.500px;top:649.3px;width:287px;height:34px"></div>
<div class="t" style="left:836px;top:656.8px;font-size:15px;line-height:20px;color:#505256;">String</div>
<svg style="left:1083.500px;top:661.8px" width="13" height="8" viewBox="0 0 13 8"><path d="M.6.800l5.900 5.800 5.900-5.800" fill="none" stroke="#b4b8c0" stroke-width="1.300"/></svg>
<div class="abs" style="left:1128px;top:659.3px;width:17.500px;height:17.500px;border:1px solid #dcdfe6;border-radius:2.500px;background:#fff"></div>
<div class="inp" style="left:1161px;top:649.3px;width:288.500px;height:34px"></div>
<div class="abs" style="left:1477px;top:234px;width:21px;height:453.500px;background:#f1f1f1"></div>
<div class="abs" style="left:1479px;top:275px;width:17px;height:391.500px;background:#c1c1c1"></div>
<svg style="left:1477px;top:234px" width="21" height="453" viewBox="0 0 21 453"><path d="M6.200 13.600l4.300-4.600 4.300 4.600z" fill="#505050"/><path d="M6.200 439.400l4.300 4.600 4.300-4.600z" fill="#8c8c8c"/></svg>
<div class="abs" style="left:398px;top:602px;width:1134px;height:43.500px;border:4px solid #f8201c;border-radius:5px"></div>
<div class="abs" style="left:1316px;top:700px;width:68.500px;height:35px;border:1px solid #dcdfe6;border-radius:4px;background:#fff"></div>
<div class="t" style="left:1335.5px;top:707.5px;font-size:15px;line-height:20px;color:#606266;">关闭</div>
<div class="abs" style="left:1403px;top:700px;width:70px;height:35px;border-radius:4px;background:#409eff"></div>
<div class="t" style="left:1423px;top:707.5px;font-size:15px;line-height:20px;color:#fff;-webkit-text-stroke:.35px #fff">确定</div>
</body>
</html>
